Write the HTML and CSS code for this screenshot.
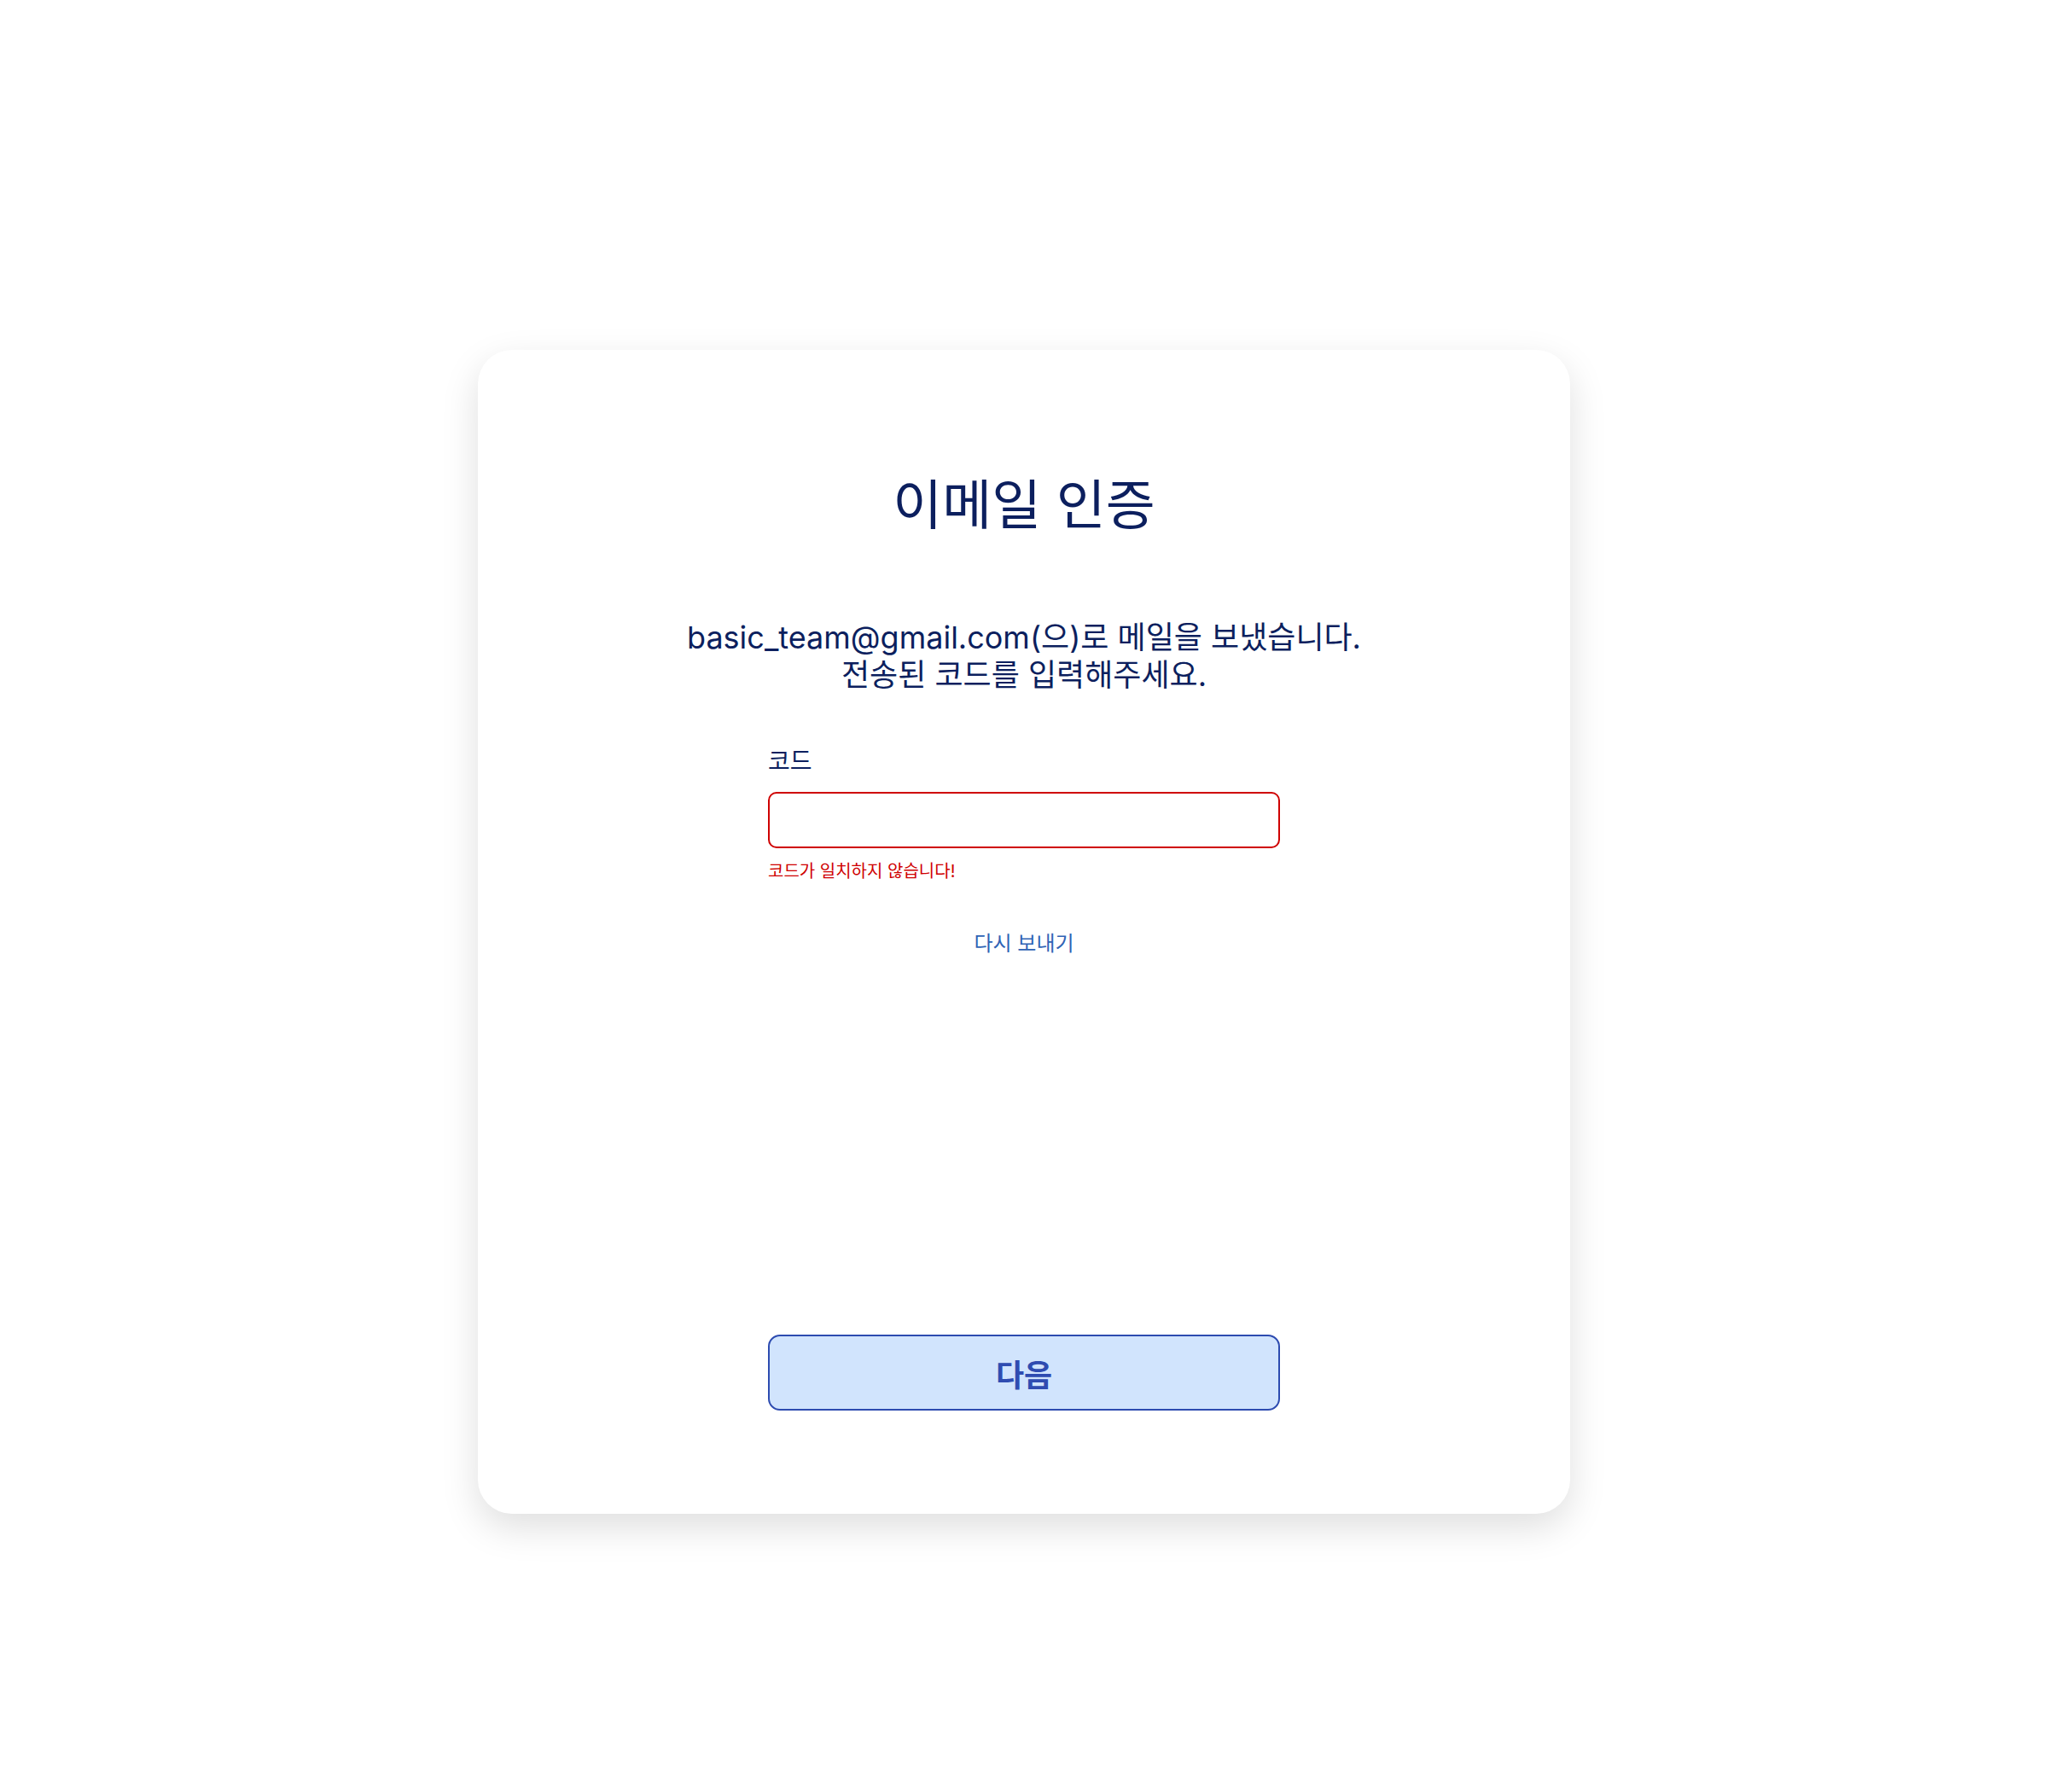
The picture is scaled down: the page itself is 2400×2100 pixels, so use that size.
FILE: index.html
```html
<!DOCTYPE html>
<html lang="ko">
<head>
<meta charset="utf-8">
<title>이메일 인증</title>
<link rel="stylesheet" href="styles.css">
</head>
<body>
<main class="page">
  <section class="card">
    <h1 class="title">이메일 인증</h1>
    <p class="message">basic_team@gmail.com(으)로 메일을 보냈습니다.<br>전송된 코드를 입력해주세요.</p>
    <div class="field">
      <label class="label" for="code">코드</label>
      <input class="input input-error" id="code" type="text">
      <p class="error">코드가 일치하지 않습니다!</p>
    </div>
    <a class="resend" href="#">다시 보내기</a>
    <button class="next" type="button">다음</button>
  </section>
</main>
</body>
</html>
```
FILE: styles.css
```css
* { box-sizing: border-box; }
html, body {
  margin: 0;
  padding: 0;
  background: #ffffff;
  font-family: Inter, "Noto Sans CJK KR", sans-serif;
}
.page {
  min-height: 2100px;
  display: flex;
  justify-content: center;
  align-items: flex-start;
  padding-top: 410px;
}
.card {
  width: 1280px;
  height: 1364px;
  background: #ffffff;
  border-radius: 40px;
  box-shadow: 0 16px 44px rgba(0, 0, 0, 0.13);
  display: flex;
  flex-direction: column;
  align-items: center;
  padding: 145px 0 121px;
}
.title {
  margin: 0;
  font-size: 63px;
  line-height: 72px;
  font-weight: 400;
  color: #0c1f5e;
  text-align: center;
}
.message {
  margin: 98px 0 0;
  font-size: 36px;
  line-height: 44px;
  color: #0c1f5e;
  text-align: center;
}
.field {
  width: 600px;
  margin-top: 63px;
  display: flex;
  flex-direction: column;
}
.label {
  font-size: 28px;
  line-height: 32px;
  color: #0c1f5e;
}
.input {
  margin-top: 20px;
  width: 600px;
  height: 66px;
  border: 2px solid #cf0000;
  border-radius: 10px;
  background: #ffffff;
  outline: none;
  font-family: inherit;
  font-size: 26px;
  padding: 0 16px;
}
.error {
  margin: 14px 0 0;
  font-size: 20px;
  line-height: 26px;
  color: #cf0000;
}
.resend {
  margin-top: 57px;
  font-size: 24px;
  line-height: 30px;
  color: #2f63b5;
  text-decoration: none;
}
.next {
  margin-top: auto;
  width: 600px;
  height: 89px;
  border: 2px solid #2d4bb0;
  border-radius: 14px;
  background: #d1e4fd;
  color: #2f4cb1;
  font-family: inherit;
  font-size: 36px;
  font-weight: 700;
  cursor: pointer;
}
```
